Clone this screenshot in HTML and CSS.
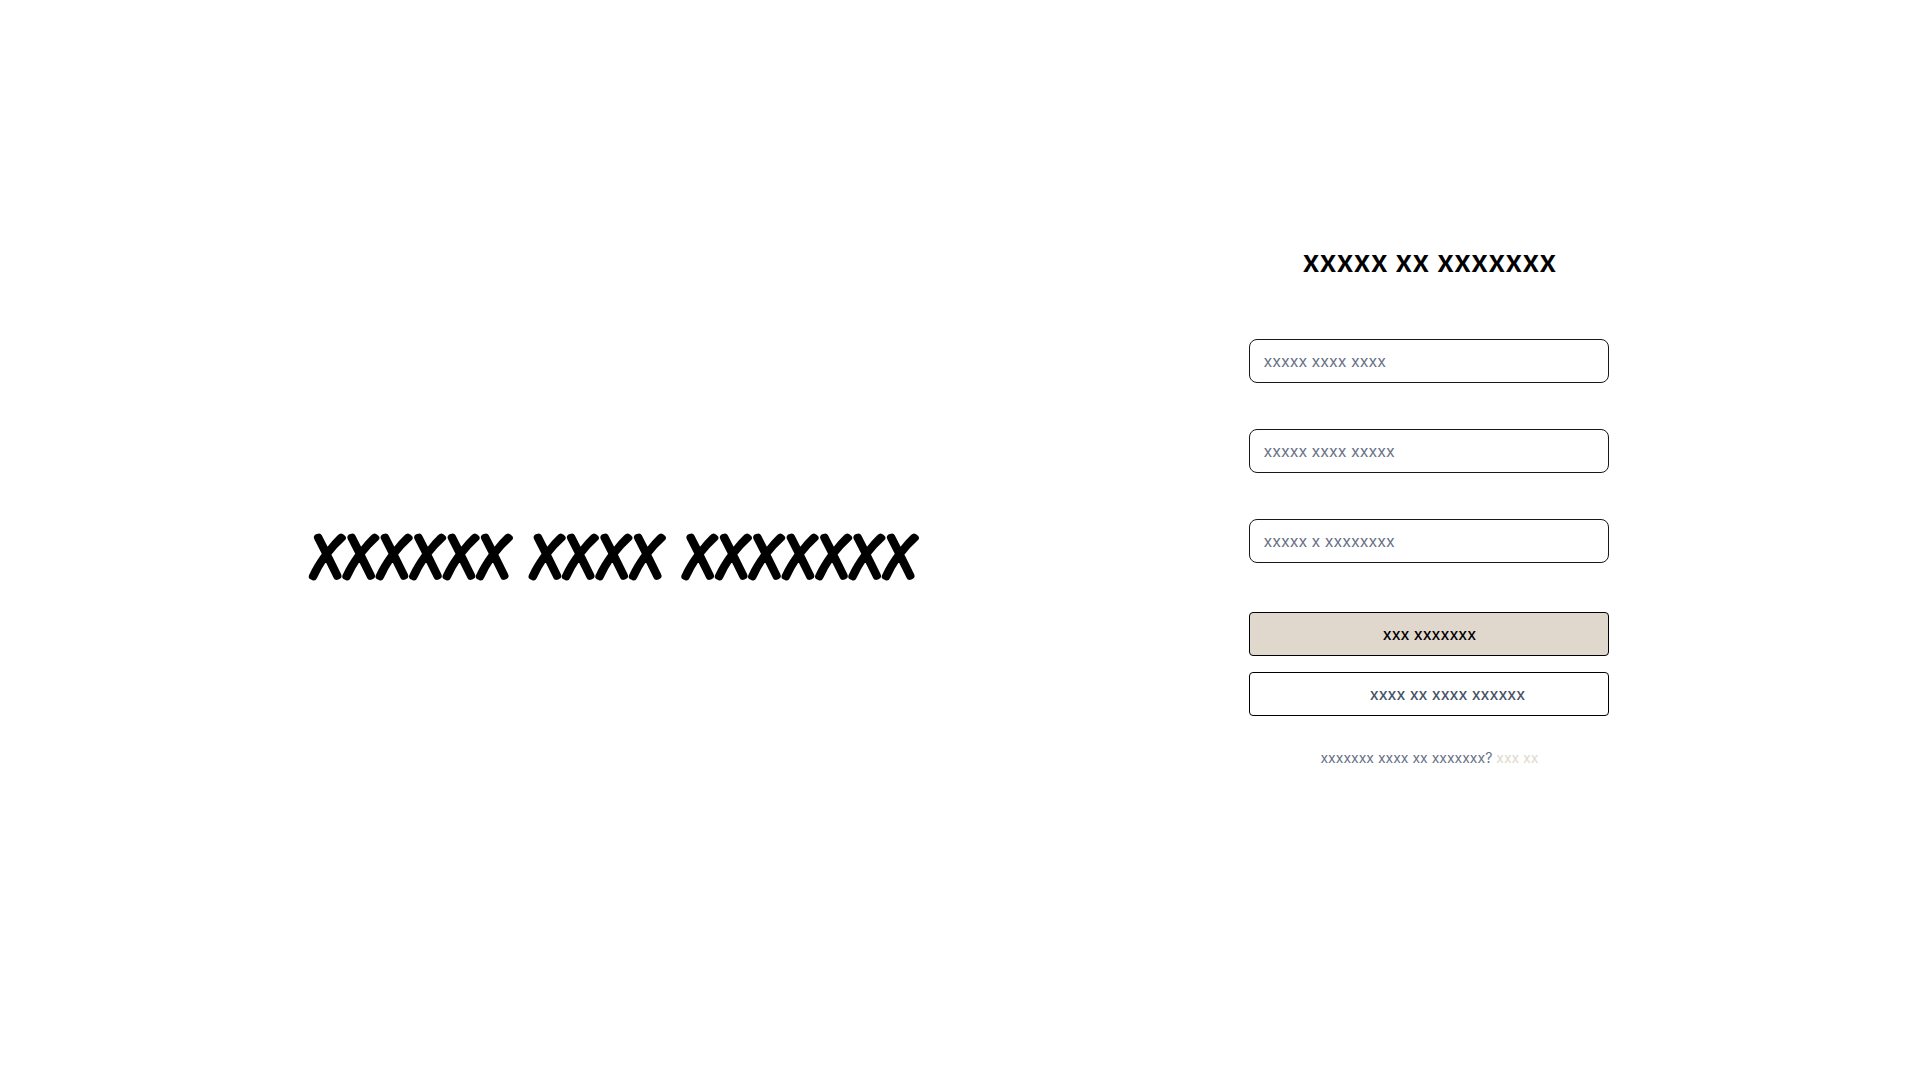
FILE: index.html
```
<!DOCTYPE html>
<html lang="en">
<head>
<meta charset="utf-8">
<meta name="viewport" content="width=device-width, initial-scale=1">
<title>xxxxx xx xxxxxxx</title>
<link rel="stylesheet" href="styles.css">
</head>
<body>
<main class="page">
  <p class="brand">xxxxxx xxxx xxxxxxx</p>
  <form class="signup">
    <h1 class="title">xxxxx xx xxxxxxx</h1>
    <div class="fields">
      <input class="field" type="text" placeholder="xxxxx xxxx xxxx" aria-label="xxxxx xxxx xxxx">
      <input class="field" type="email" placeholder="xxxxx xxxx xxxxx" aria-label="xxxxx xxxx xxxxx">
      <input class="field" type="password" placeholder="xxxxx x xxxxxxxx" aria-label="xxxxx x xxxxxxxx">
    </div>
    <div class="actions">
      <button class="button primary" type="submit">xxx xxxxxxx</button>
      <button class="button provider" type="button"><span class="provider-icon"></span>xxxx xx xxxx xxxxxx</button>
    </div>
    <p class="switch">xxxxxxx xxxx xx xxxxxxx? <a href="#">xxx xx</a></p>
  </form>
</main>
</body>
</html>
```
FILE: styles.css
```
* { box-sizing: border-box; }

body {
  margin: 0;
  background: #fff;
  color: #000;
  font-family: Inter, "Liberation Sans", sans-serif;
  font-size: 16px;
  line-height: 24px;
}

.page {
  display: flex;
  flex-wrap: wrap;
  justify-content: space-evenly;
  align-items: center;
  gap: 48px 0;
  min-height: 100vh;
}

.brand {
  margin: 0;
  padding: 36px 22px 0 0;
  font-family: Farsan, "Noto Sans", cursive;
  font-size: 96px;
  font-weight: 700;
  line-height: 80px;
}

.signup {
  width: 360px;
  max-width: 100%;
  padding-bottom: 70px;
}

.title {
  margin: 0;
  font-size: 30px;
  font-weight: 600;
  line-height: 36px;
  text-align: center;
}

.fields {
  display: grid;
  gap: 46px;
  margin-top: 60px;
}

.field {
  width: 100%;
  height: 44px;
  padding: 0 13px;
  border: 1px solid #18181b;
  border-radius: 8px;
  background: #fff;
  font: inherit;
}

.field::placeholder {
  color: #667085;
  opacity: 1;
}

.actions {
  display: grid;
  gap: 16px;
  margin-top: 49px;
}

.button {
  display: flex;
  align-items: center;
  justify-content: center;
  gap: 12px;
  height: 44px;
  border: 1px solid #000;
  border-radius: 4px;
  font: inherit;
  font-weight: 500;
}

.primary {
  background: #e0d8cd;
  color: #000;
}

.provider {
  background: #fff;
  color: #475467;
}

.provider-icon {
  width: 24px;
  height: 24px;
}

.switch {
  margin: 32px 0 0;
  color: #667085;
  font-size: 14px;
  line-height: 20px;
  text-align: center;
}

.switch a {
  color: #e0d8cd;
  text-decoration: none;
}
```
